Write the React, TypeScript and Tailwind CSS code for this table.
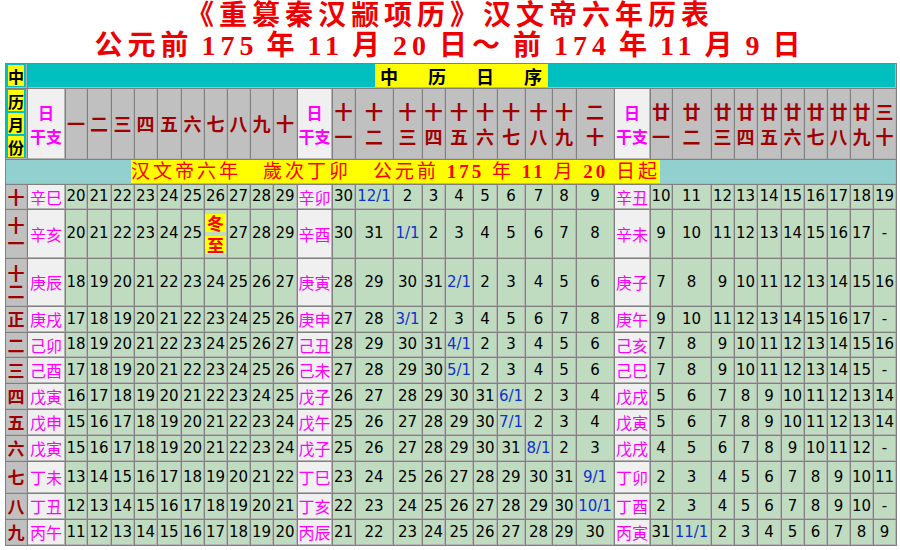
import React from 'react';

const CJK = "font-['Noto_Sans_CJK_SC',sans-serif]";
const NUM = "font-['DejaVu_Sans','Noto_Sans_CJK_SC',sans-serif]";
const TITLE = "font-['Liberation_Serif','Noto_Sans_CJK_SC',serif]";

const HEAD: string[][] = [
  ['一'], ['二'], ['三'], ['四'], ['五'], ['六'], ['七'], ['八'], ['九'], ['十'],
  ['十', '一'], ['十', '二'], ['十', '三'], ['十', '四'], ['十', '五'], ['十', '六'], ['十', '七'], ['十', '八'], ['十', '九'], ['二', '十'],
  ['廿', '一'], ['廿', '二'], ['廿', '三'], ['廿', '四'], ['廿', '五'], ['廿', '六'], ['廿', '七'], ['廿', '八'], ['廿', '九'], ['三', '十'],
];

type Row = { m: string[]; gz: string[]; d: string };

const ROWS: Row[] = [
  { m: ['十'], gz: ['辛巳', '辛卯', '辛丑'], d: '20 21 22 23 24 25 26 27 28 29 30 12/1 2 3 4 5 6 7 8 9 10 11 12 13 14 15 16 17 18 19' },
  { m: ['十', '一'], gz: ['辛亥', '辛酉', '辛未'], d: '20 21 22 23 24 25 冬至 27 28 29 30 31 1/1 2 3 4 5 6 7 8 9 10 11 12 13 14 15 16 17 -' },
  { m: ['十', '二'], gz: ['庚辰', '庚寅', '庚子'], d: '18 19 20 21 22 23 24 25 26 27 28 29 30 31 2/1 2 3 4 5 6 7 8 9 10 11 12 13 14 15 16' },
  { m: ['正'], gz: ['庚戌', '庚申', '庚午'], d: '17 18 19 20 21 22 23 24 25 26 27 28 3/1 2 3 4 5 6 7 8 9 10 11 12 13 14 15 16 17 -' },
  { m: ['二'], gz: ['己卯', '己丑', '己亥'], d: '18 19 20 21 22 23 24 25 26 27 28 29 30 31 4/1 2 3 4 5 6 7 8 9 10 11 12 13 14 15 16' },
  { m: ['三'], gz: ['己酉', '己未', '己巳'], d: '17 18 19 20 21 22 23 24 25 26 27 28 29 30 5/1 2 3 4 5 6 7 8 9 10 11 12 13 14 15 -' },
  { m: ['四'], gz: ['戊寅', '戊子', '戊戌'], d: '16 17 18 19 20 21 22 23 24 25 26 27 28 29 30 31 6/1 2 3 4 5 6 7 8 9 10 11 12 13 14' },
  { m: ['五'], gz: ['戊申', '戊午', '戊寅'], d: '15 16 17 18 19 20 21 22 23 24 25 26 27 28 29 30 7/1 2 3 4 5 6 7 8 9 10 11 12 13 14' },
  { m: ['六'], gz: ['戊寅', '戊子', '戊戌'], d: '15 16 17 18 19 20 21 22 23 24 25 26 27 28 29 30 31 8/1 2 3 4 5 6 7 8 9 10 11 12 -' },
  { m: ['七'], gz: ['丁未', '丁巳', '丁卯'], d: '13 14 15 16 17 18 19 20 21 22 23 24 25 26 27 28 29 30 31 9/1 2 3 4 5 6 7 8 9 10 11' },
  { m: ['八'], gz: ['丁丑', '丁亥', '丁酉'], d: '12 13 14 15 16 17 18 19 20 21 22 23 24 25 26 27 28 29 30 10/1 2 3 4 5 6 7 8 9 10 -' },
  { m: ['九'], gz: ['丙午', '丙辰', '丙寅'], d: '11 12 13 14 15 16 17 18 19 20 21 22 23 24 25 26 27 28 29 30 31 11/1 2 3 4 5 6 7 8 9' },
];

const cell = 'border-r border-b border-[#b4b4b4] flex items-center justify-center overflow-hidden';

function GzHead() {
  return (
    <div className={`${cell} bg-[#f0f0f0] flex-col gap-[6px] text-[#ff00ff] font-bold text-[16px] leading-[18px] ${CJK}`}>
      <span>日</span>
      <span>干支</span>
    </div>
  );
}

function DayHead({ t }: { t: string[] }) {
  return (
    <div className={`${cell} bg-[#c0c0c0] flex-col gap-[6px] text-[#a00000] font-bold text-[18px] leading-[19px] ${CJK}`}>
      {t.map((c, i) => <span key={i}>{c}</span>)}
    </div>
  );
}

function Day({ v }: { v: string }) {
  if (v === '冬至') {
    return (
      <div className={`${cell} bg-[#c0dcc0] flex-col gap-[4px] text-[#ff0000] font-bold text-[17px] leading-[18px] ${CJK}`}>
        <span className="bg-[#ffff00] w-full text-center">冬</span>
        <span className="bg-[#ffff00] w-full text-center">至</span>
      </div>
    );
  }
  const blue = v.includes('/');
  return (
    <div className={`${cell} bg-[#c0dcc0] text-[15px] ${NUM} ${blue ? 'text-[#1030d0]' : 'text-black'}`}>{v}</div>
  );
}

function Gz({ v }: { v: string }) {
  return <div className={`${cell} bg-[#f0f0f0] text-[#ff00ff] text-[16px] leading-[18px] ${CJK}`}>{v}</div>;
}

function Month({ m }: { m: string[] }) {
  return (
    <div className={`${cell} bg-[#c0c0c0] text-[#a00000] font-bold text-[17px] leading-[18px] ${CJK} ${m.length > 1 ? 'flex-col justify-between py-[3px]' : ''}`}>
      {m.map((c, i) => <span key={i}>{c}</span>)}
    </div>
  );
}

export default function App() {
  return (
    <div className="w-[900px] h-[550px] bg-white overflow-hidden">
      <div className={`h-[63px] flex flex-col text-[#ee0000] font-bold ${TITLE}`}>
        <div className="w-full text-center h-[31px] leading-[31px] text-[28px] tracking-[5px] whitespace-nowrap">《重篡秦汉颛项历》汉文帝六年历表</div>
        <div className="w-full text-center h-[30px] leading-[30px] text-[28px] tracking-[5px] [word-spacing:-4px] whitespace-pre">公元前 175 年 11 月 20 日～ 前 174 年 11 月 9 日</div>
      </div>

      <div className="ml-[5px] w-[892px] border border-[#808080] bg-[#808080] grid gap-[1px] grid-cols-[21px_37px_21px_23px_22px_22px_23px_22px_22px_22px_22px_23px_34px_22px_37px_28px_22px_27px_23px_27px_26px_23px_37px_35px_21px_38px_22px_22px_23px_22px_22px_22px_22px_22px] grid-rows-[24px_70px_24px_24px_48px_47px_25px_24px_25px_25px_25px_25px_31px_25px_25px]">
        {/* row: 中 / 中历日序 */}
        <div className={`${cell} bg-[#00bfbf] px-[2px] py-[1px] items-stretch`}>
          <span className={`bg-[#ffff00] w-full flex items-center justify-center text-black font-bold text-[16px] leading-none ${CJK}`}>中</span>
        </div>
        <div className={`${cell} col-[span_33/span_33] bg-[#00bfbf] items-stretch`}>
          <span className={`bg-[#ffff00] pl-[5px] flex items-center text-black font-bold text-[18px] leading-none tracking-[6px] whitespace-pre ${CJK}`}>中　历　日　序</span>
        </div>

        {/* row: header */}
        <div className={`${cell} bg-[#00bfbf] flex-col justify-start gap-[2px] px-[2px] pt-[1px]`}>
          {['历', '月', '份'].map(c => (
            <span key={c} className={`bg-[#ffff00] w-full h-[21px] flex items-center justify-center text-black font-bold text-[16px] leading-none ${CJK}`}>{c}</span>
          ))}
        </div>
        <GzHead />
        {HEAD.slice(0, 10).map((t, i) => <DayHead key={`a${i}`} t={t} />)}
        <GzHead />
        {HEAD.slice(10, 20).map((t, i) => <DayHead key={`b${i}`} t={t} />)}
        <GzHead />
        {HEAD.slice(20, 30).map((t, i) => <DayHead key={`c${i}`} t={t} />)}

        {/* row: year */}
        <div className={`${cell} col-span-full bg-[#92d0d0] justify-start items-stretch pl-[125px]`}>
          <span className={`bg-[#ffff00] flex items-center text-[#ff0000] text-[19px] leading-none tracking-[3px] whitespace-pre ${TITLE}`}>
            汉文帝六年　歲次丁卯　公元前 <b>175</b> 年 <b>11</b> 月 <b>20</b> 日起
          </span>
        </div>

        {ROWS.map((r, ri) => {
          const d = r.d.split(' ');
          return (
            <React.Fragment key={ri}>
              <Month m={r.m} />
              <Gz v={r.gz[0]} />
              {d.slice(0, 10).map((v, i) => <Day key={`x${i}`} v={v} />)}
              <Gz v={r.gz[1]} />
              {d.slice(10, 20).map((v, i) => <Day key={`y${i}`} v={v} />)}
              <Gz v={r.gz[2]} />
              {d.slice(20, 30).map((v, i) => <Day key={`z${i}`} v={v} />)}
            </React.Fragment>
          );
        })}
      </div>
    </div>
  );
}
